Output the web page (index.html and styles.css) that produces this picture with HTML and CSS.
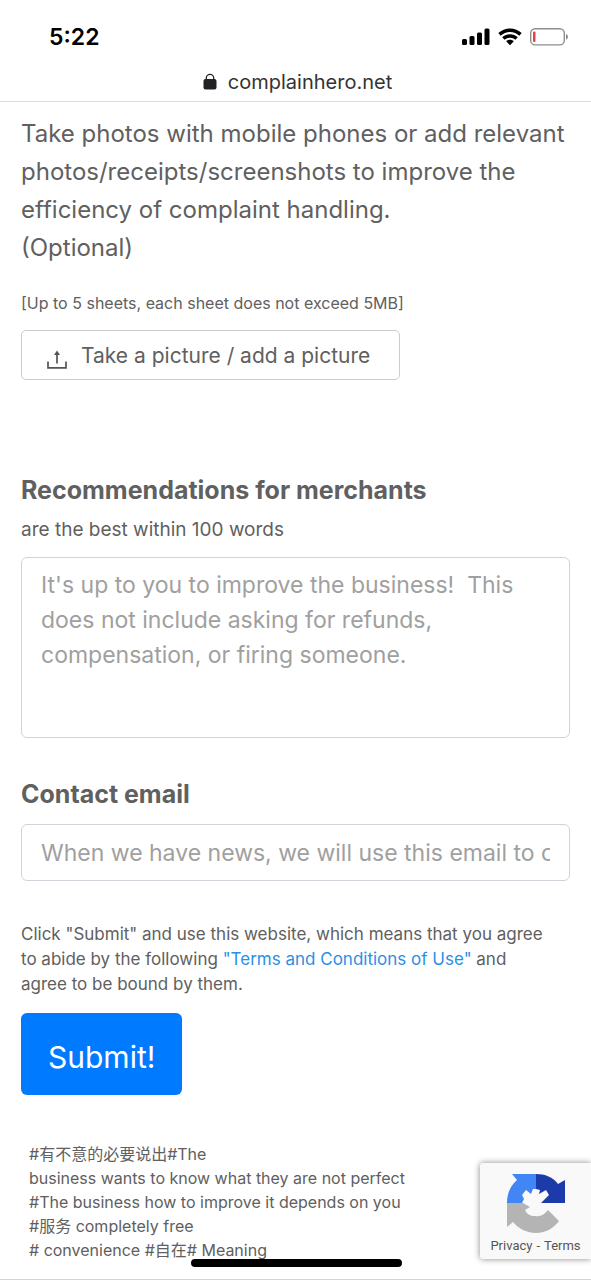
FILE: index.html
```html
<!DOCTYPE html>
<html lang="en">
<head>
<meta charset="utf-8">
<meta name="viewport" content="width=device-width, initial-scale=1">
<title>Complaint form</title>
<link rel="stylesheet" href="styles.css">
</head>
<body>
<header class="top">
  <div class="status">
    <span class="time">5:22</span>
    <span class="status-icons">
      <svg width="28" height="18" viewBox="0 0 28 18" aria-hidden="true"><rect x="0" y="11" width="5" height="6" rx="1.5"/><rect x="7.5" y="8" width="5" height="9" rx="1.5"/><rect x="15" y="4.500" width="5" height="12.500" rx="1.500"/><rect x="22.500" y="0.500" width="5" height="16.500" rx="1.500"/></svg>
      <svg width="24" height="18" viewBox="0 0 24 18" aria-hidden="true"><path d="M12 .5C7.500.5 3.400 2.200.3 5.100L2.700 7.700C5.200 5.400 8.400 4 12 4s6.800 1.400 9.300 3.700l2.400-2.600C20.600 2.200 16.500.5 12 .5zM12 6.300c-3 0-5.700 1.100-7.800 3l2.400 2.500c1.400-1.300 3.300-2.100 5.400-2.100s4 .8 5.400 2.100l2.400-2.500c-2.100-1.900-4.800-3-7.800-3zM12 11.800c-1.500 0-2.800.5-3.800 1.500L12 17.300l3.800-4c-1-1-2.300-1.500-3.800-1.500z"/></svg>
      <svg width="39" height="18" viewBox="0 0 39 18" aria-hidden="true"><rect x="0.700" y="0.700" width="33.600" height="16.200" rx="4.500" fill="none" stroke="#8e8e8e" stroke-width="1.400"/><rect x="3" y="3.500" width="2.500" height="10.500" rx="1" fill="#e2473f"/><path d="M36 6c2.600.6 2.600 5 0 5.600z" fill="#8e8e8e"/></svg>
    </span>
  </div>
  <div class="address">
    <svg width="14" height="18" viewBox="0 0 14 18" aria-hidden="true"><path d="M3.300 8V5a3.700 3.700 0 0 1 7.400 0v3" fill="none" stroke="#222226" stroke-width="1.300"/><rect x="0.500" y="6" width="13" height="10.500" rx="2" fill="#222226"/></svg>
    <span>complainhero.net</span>
  </div>
</header>
<main class="page">
  <form class="form">
    <p class="intro">Take photos with mobile phones or add relevant photos/receipts/screenshots to improve the efficiency of complaint handling.<br>(Optional)</p>
    <p class="limit">[Up to 5 sheets, each sheet does not exceed 5MB]</p>
    <button class="upload" type="button">
      <svg width="20" height="20" viewBox="0 0 20 20" aria-hidden="true"><path d="M1 12.500v6.300h18v-6.300M10 14.500V3" fill="none" stroke="#555" stroke-width="1.700"/><path d="M10 1.500 7 6h6z" fill="#555"/></svg>
      <span>Take a picture / add a picture</span>
    </button>
    <label class="label" for="advice">Recommendations for merchants</label>
    <p class="hint" id="advice-hint">are the best within 100 words</p>
    <textarea class="field area" id="advice" aria-describedby="advice-hint" placeholder="It's up to you to improve the business!&nbsp; This does not include asking for refunds, compensation, or firing someone."></textarea>
    <label class="label" for="email">Contact email</label>
    <input class="field email" id="email" type="email" placeholder="When we have news, we will use this email to contact you">
    <p class="terms">Click "Submit" and use this website, which means that you agree<br>to abide by the following <a href="#terms">"Terms and Conditions of Use"</a> and<br>agree to be bound by them.</p>
    <button class="submit" type="submit">Submit!</button>
  </form>
  <p class="tags">#有不意的必要说出#The<br>business wants to know what they are not perfect<br>#The business how to improve it depends on you<br>#服务 completely free<br># convenience #自在# Meaning</p>
</main>
<aside class="captcha">
  <svg width="60" height="60" viewBox="0 0 60 60" aria-hidden="true">
    <path fill="#1c3aa9" d="M30 1C39 1 47 4 52 11L59 7V30H35L43 22 40 17 33 21 34 17 30 16z"/>
    <path fill="#4285f4" d="M30 1H6L11 7C4 13 1 21 1 30H16L18 26 16 22 20 17 25 21 27 16 30 16z"/>
    <path fill="#b4b4b4" d="M1 30V54L7 49C13 56 21 60 30 60 40 60 48 55 53 48L42 37C38 42 34 44 29 43 24 43 21 41 19 37L24 34 17 30z"/>
  </svg>
  <div class="captcha-links"><a href="#privacy">Privacy</a><span>-</span><a href="#captcha-terms">Terms</a></div>
</aside>
<div class="home-bar"></div>
</body>
</html>
```
FILE: styles.css
```css
* { box-sizing: border-box; }
body {
  position: relative;
  min-height: 100vh;
  margin: 0;
  background: #fff;
  color: #606060;
  font-family: Inter, "Noto Sans CJK SC", sans-serif;
  border-bottom: 1px solid #d4d4d4;
}
p { margin: 0; }
a { color: inherit; text-decoration: none; }
svg { display: block; flex: none; }
.top { border-bottom: 1px solid #dedede; color: #333; }
.status {
  display: flex;
  align-items: center;
  justify-content: space-between;
  height: 62px;
  padding: 12px 22px 0 49px;
}
.time { color: #000; font-size: 23px; font-weight: 600; }
.status-icons { display: flex; gap: 8px; }
.address {
  display: flex;
  align-items: center;
  justify-content: center;
  gap: 11px;
  height: 39px;
  padding-left: 4px;
  font-size: 20px;
}
.page { padding: 13px 21px 12px; }
.form { display: flex; flex-direction: column; align-items: flex-start; }
.intro { font-size: 24px; line-height: 38px; }
.limit { margin-top: 24px; font-size: 16px; line-height: 24px; }
.upload {
  display: flex;
  align-items: center;
  gap: 14px;
  height: 50px;
  margin: 15px 0 94px;
  padding: 0 29px 0 25px;
  border: 1px solid #ccc;
  border-radius: 5px;
  background: #fff;
  color: #606060;
  font: 21px Inter, sans-serif;
}
.upload svg { margin-top: 8px; }
.label { font-size: 25px; font-weight: 700; line-height: 32px; }
.hint { margin: 12px 0 15px; font-size: 19px; line-height: 24px; }
.field {
  width: 100%;
  padding: 10px 19px;
  border: 1px solid #ced4da;
  border-radius: 6px;
  background: #fff;
  color: #606060;
  font: 23px/35px Inter, sans-serif;
}
.field::placeholder { color: #a0a0a0; opacity: 1; }
.area { display: block; height: 181px; margin-bottom: 40px; resize: none; overflow: hidden; }
.email { height: 57px; margin-top: 14px; }
.terms { margin: 41px 0 16px; font-size: 17px; line-height: 25px; }
.terms a { color: #2b8fe8; }
.submit {
  height: 82px;
  padding: 6px 27px 0;
  border: 0;
  border-radius: 6px;
  background: #007bff;
  color: #fff;
  font: 30px Inter, sans-serif;
}
.tags { margin: 47px 8px 0; font-size: 16px; line-height: 24px; }
.captcha {
  position: absolute;
  right: 0;
  bottom: 20px;
  display: flex;
  flex-direction: column;
  gap: 3px;
  align-items: center;
  width: 111px;
  padding: 10px 0 3px;
  border-radius: 3px 0 0 3px;
  background: #f9f9f9;
  box-shadow: 0 0 6px #888;
  color: #555;
}
.captcha-links {
  display: flex;
  gap: 4px;
  font: 13px/20px Roboto, sans-serif;
}
.home-bar {
  position: absolute;
  bottom: 12px;
  left: 50%;
  width: 211px;
  height: 8px;
  margin-left: -105px;
  border-radius: 4px;
  background: #000;
}
```
